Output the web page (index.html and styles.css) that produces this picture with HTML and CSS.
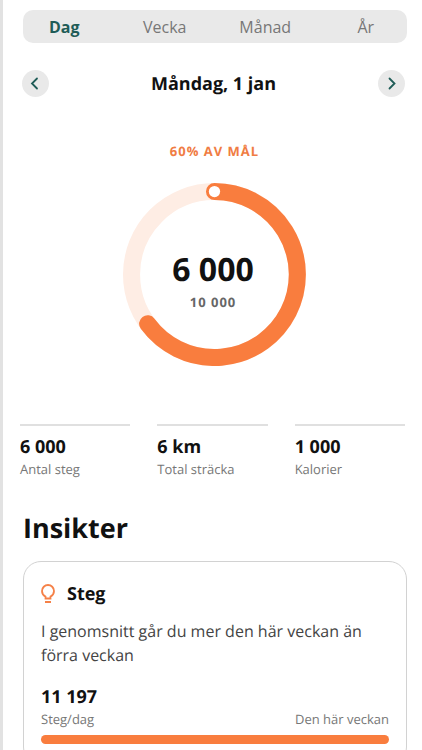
FILE: index.html
```html
<!DOCTYPE html>
<html lang="sv">
<head>
<meta charset="utf-8">
<meta name="viewport" content="width=device-width, initial-scale=1">
<title>Steg</title>
<link rel="stylesheet" href="styles.css">
</head>
<body>
<main class="screen">
  <nav class="tabs">
    <div class="tab-row">
      <button class="tab active" type="button">Dag</button>
      <button class="tab" type="button">Vecka</button>
      <button class="tab" type="button">Månad</button>
      <button class="tab" type="button">År</button>
    </div>
  </nav>

  <header class="date-nav">
    <button class="round" type="button" aria-label="Föregående dag">
      <svg width="27" height="27" viewBox="0 0 27 27"><path d="M15 8.500l-5 5 5 5"/></svg>
    </button>
    <h1 class="date">Måndag, 1 jan</h1>
    <button class="round" type="button" aria-label="Nästa dag">
      <svg width="27" height="27" viewBox="0 0 27 27"><path d="M11.500 8.500l5 5-5 5"/></svg>
    </button>
  </header>

  <section class="goal">
    <p class="goal-label">60% AV MÅL</p>
    <div class="ring">
      <svg class="ring-art" viewBox="0 0 182 182" aria-hidden="true">
        <circle class="track" cx="91" cy="91" r="82.5"/>
        <path class="progress" d="M91 8.500A82.500 82.500 0 1 1 24.500 140"/>
        <circle class="start" cx="91" cy="8.500" r="5.600"/>
      </svg>
      <div class="ring-text">
        <strong class="steps">6 000</strong>
        <span class="target">10 000</span>
      </div>
    </div>
  </section>

  <dl class="stats">
    <div class="stat"><dd class="value">6 000</dd><dt class="caption">Antal steg</dt></div>
    <div class="stat"><dd class="value">6 km</dd><dt class="caption">Total sträcka</dt></div>
    <div class="stat"><dd class="value">1 000</dd><dt class="caption">Kalorier</dt></div>
  </dl>

  <h2 class="heading">Insikter</h2>
  <article class="card">
    <div class="card-head">
      <svg class="bulb" width="14" height="20" viewBox="0 0 14 20" aria-hidden="true">
        <path d="M4.500 14.500V12.600C2.400 11.400 1 9.400 1 7a6 6 0 0 1 12 0c0 2.400-1.400 4.400-3.500 5.600v1.900zM4 18h6"/>
      </svg>
      <h3 class="card-title">Steg</h3>
    </div>
    <p class="card-text">I genomsnitt går du mer den här veckan än förra veckan</p>
    <p class="value">11 197</p>
    <div class="bar-labels"><span class="caption">Steg/dag</span><span class="caption">Den här veckan</span></div>
    <div class="bar"></div>
  </article>
</main>
</body>
</html>
```
FILE: styles.css
```css
* {
  box-sizing: border-box;
}

body,
h1,
h2,
h3,
p,
dl,
dd {
  margin: 0;
}

body {
  font-family: "Open Sans", "Noto Sans", sans-serif;
  text-rendering: geometricPrecision;
  color: #111;
  background: #fff;
}

button {
  padding: 0;
  border: 0;
  font: inherit;
  cursor: pointer;
}

.screen {
  height: 100vh;
  overflow-y: auto;
  scrollbar-width: none;
  padding: 10px 15px 0 20px;
  border-left: 3px solid #e2e2e2;
}

.tabs {
  background: #e9e9e9;
  border-radius: 10px;
}

.tab-row {
  display: grid;
  grid-template-columns: repeat(4, 1fr);
  margin: 0 -9px;
}

.tab {
  height: 33px;
  background: none;
  color: #777;
  font-size: 16px;
}

.tab.active {
  color: #1f5c57;
  font-weight: 700;
}

.date-nav {
  display: flex;
  align-items: center;
  justify-content: space-between;
  margin: 27px 2px 0 -1px;
}

.round {
  display: grid;
  place-items: center;
  width: 27px;
  height: 27px;
  border-radius: 50%;
  background: #e9e9e9;
}

.round path {
  fill: none;
  stroke: #1f5c57;
  stroke-width: 1.800;
  stroke-linecap: round;
}

.date,
.value,
.card-title {
  font-size: 18px;
  line-height: 24px;
  font-weight: 700;
}

.goal {
  display: flex;
  flex-direction: column;
  align-items: center;
  gap: 22px;
  margin: 44px 1px 0 0;
}

.goal-label {
  color: #f07c43;
  font-size: 13px;
  line-height: 20px;
  font-weight: 700;
  letter-spacing: 1px;
}

.ring {
  display: grid;
  place-items: center;
  width: 183px;
  aspect-ratio: 1;
}

.ring-art,
.ring-text {
  grid-area: 1 / 1;
}

.ring-art {
  width: 100%;
}

.track,
.progress {
  fill: none;
  stroke-width: 17;
}

.track {
  stroke: #feede4;
}

.progress {
  stroke: #f97d3e;
  stroke-linecap: round;
}

.start {
  fill: #fff;
}

.ring-text {
  display: flex;
  flex-direction: column;
  align-items: center;
  gap: 2px;
  padding: 12px 3px 0 0;
}

.steps {
  font-size: 32px;
  line-height: 40px;
}

.target {
  color: #666;
  font-size: 13px;
  line-height: 20px;
  font-weight: 700;
  letter-spacing: 1px;
}

.stats {
  display: grid;
  grid-template-columns: repeat(3, 1fr);
  gap: 27px;
  margin: 58px 2px 0 -3px;
}

.stat {
  padding-top: 9px;
  border-top: 2px solid #e0e0e0;
}

.caption {
  color: #777;
  font-size: 13px;
  line-height: 20px;
}

.heading {
  margin-top: 31px;
  font-size: 27px;
  line-height: 36px;
}

.card {
  margin-top: 15px;
  padding: 20px 17px;
  border: 1px solid #d2d2d2;
  border-radius: 18px;
}

.card-head {
  display: flex;
  align-items: center;
  gap: 12px;
}

.bulb path {
  fill: none;
  stroke: #f58148;
  stroke-width: 1.800;
}

.card-text {
  margin: 13px 0 18px;
  color: #444;
  font-size: 16px;
  line-height: 24px;
}

.bar-labels {
  display: flex;
  justify-content: space-between;
}

.bar {
  height: 9px;
  margin-top: 6px;
  border-radius: 5px;
  background: #f97d3e;
}
```
